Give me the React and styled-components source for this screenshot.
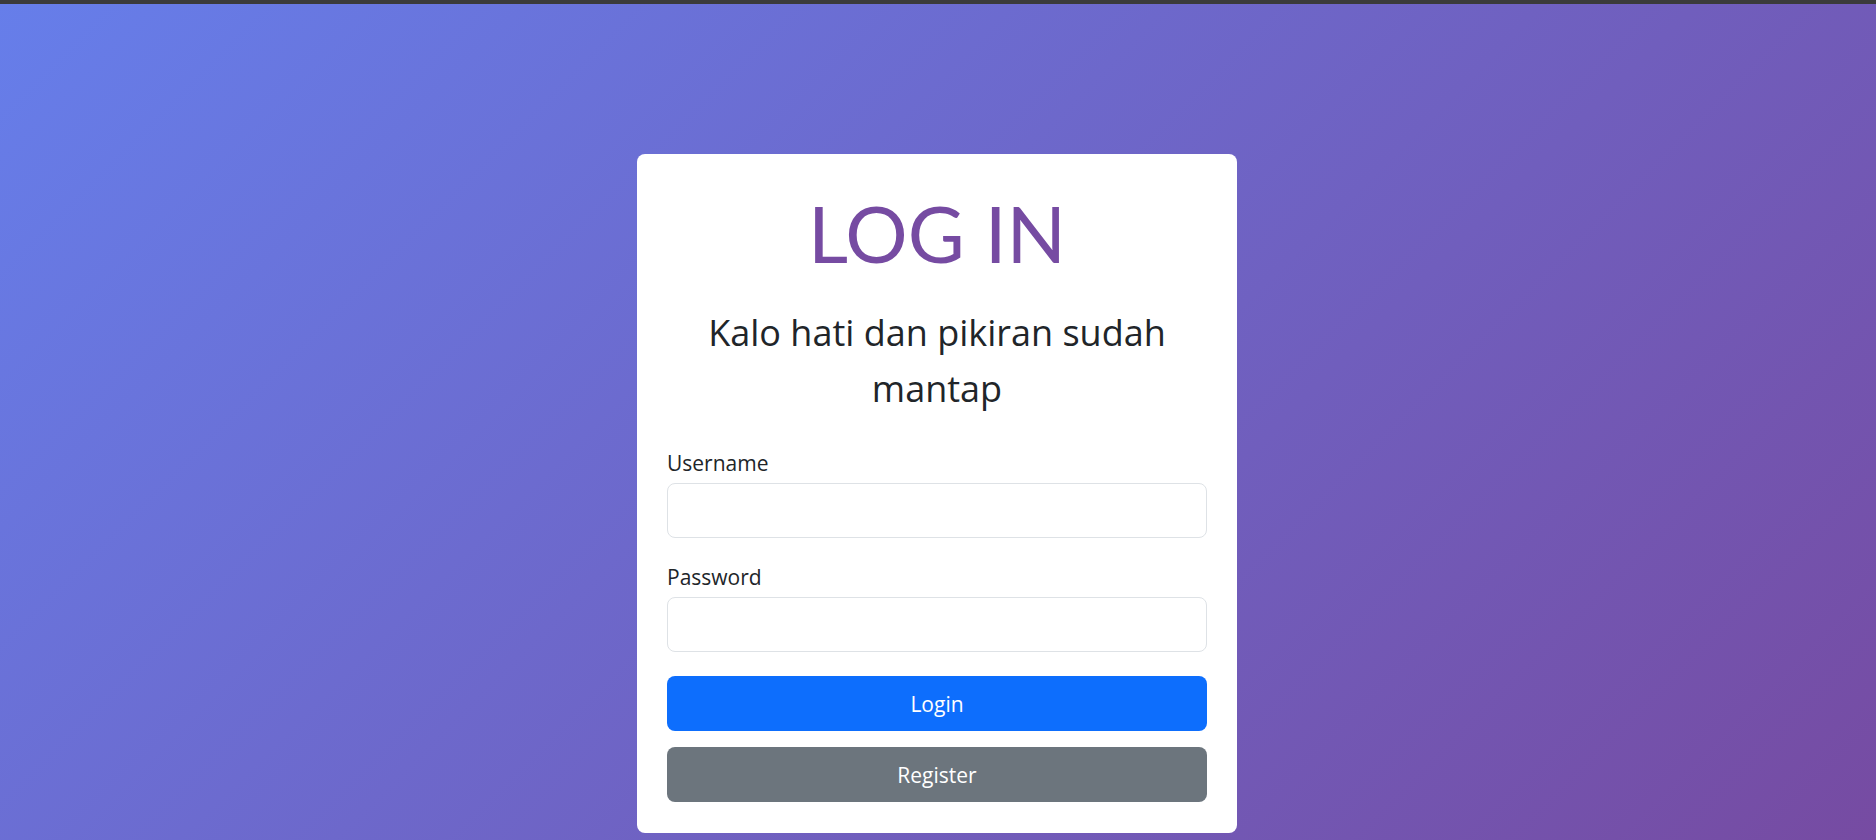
import React from 'react'
import styled, { createGlobalStyle } from 'styled-components'

const GlobalStyle = createGlobalStyle`
  html, body {
    margin: 0;
    padding: 0;
    height: 100%;
    overflow: hidden;
  }
  body {
    font-family: "Open Sans", "Noto Sans", sans-serif;
    color: #212529;
  }
  * { box-sizing: border-box; }
`

const Page = styled.div`
  display: flex;
  flex-direction: column;
  min-height: 100vh;
  background: linear-gradient(135deg, #667eea 0%, #764ba2 100%);
`

const TopBar = styled.div`
  height: 4px;
  background: #3b3b3b;
`

const Main = styled.main`
  flex: 1;
  display: flex;
  justify-content: center;
  align-items: flex-start;
  padding: 150px 2px 0 0;
`

const Card = styled.div`
  width: 600px;
  background: #fff;
  border-radius: 8px;
  padding: 30px 30px 31px;
`

const Title = styled.h1`
  margin: 2px 0 0;
  font-family: "Lato", "Open Sans", sans-serif;
  font-weight: 400;
  font-size: 78px;
  line-height: 94px;
  text-align: center;
  color: #764ba2;
`

const Tagline = styled.p`
  margin: 25px 0 31px;
  font-family: "Open Sans", sans-serif;
  font-size: 36px;
  font-weight: 500;
  line-height: 56px;
  text-align: center;
  color: #212529;
`

const Form = styled.form`
  display: flex;
  flex-direction: column;
`

const Field = styled.div`
  display: flex;
  flex-direction: column;
  margin-bottom: 24px;
`

const Label = styled.label`
  font-size: 21px;
  line-height: 30px;
  margin-bottom: 5px;
`

const Input = styled.input`
  height: 55px;
  width: 100%;
  border: 1px solid #dee2e6;
  border-radius: 8px;
  padding: 0 18px;
  font-size: 21px;
  font-family: inherit;
  outline: none;
`

const Button = styled.button`
  height: 55px;
  width: 100%;
  border: none;
  border-radius: 8px;
  background: ${p => (p.$variant === 'secondary' ? '#6c757d' : '#0d6efd')};
  color: #fff;
  font-family: "Open Sans", sans-serif;
  font-size: 21px;
  display: flex;
  align-items: center;
  justify-content: center;
  cursor: pointer;
  & + & {
    margin-top: 16px;
  }
`

const App = () => {
  return (
    <>
      <GlobalStyle />
      <Page>
        <TopBar />
        <Main>
          <Card>
            <Title>LOG IN</Title>
            <Tagline>
              Kalo hati dan pikiran sudah
              <br />
              mantap
            </Tagline>
            <Form onSubmit={e => e.preventDefault()}>
              <Field>
                <Label htmlFor="username">Username</Label>
                <Input id="username" type="text" />
              </Field>
              <Field>
                <Label htmlFor="password">Password</Label>
                <Input id="password" type="password" />
              </Field>
              <Button type="submit">Login</Button>
              <Button type="button" $variant="secondary">Register</Button>
            </Form>
          </Card>
        </Main>
      </Page>
    </>
  )
}

export default App
